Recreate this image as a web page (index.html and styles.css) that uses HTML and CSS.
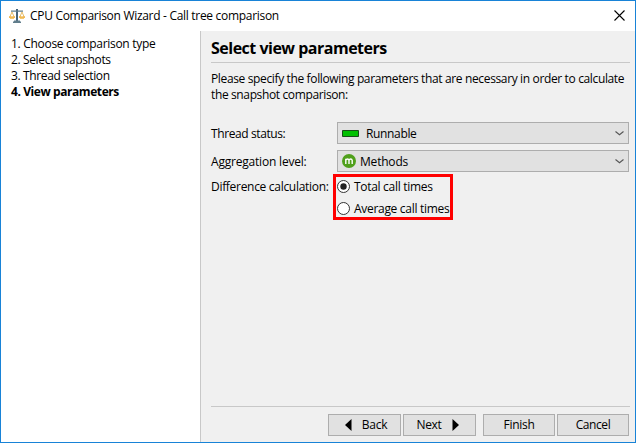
FILE: index.html
```html
<!DOCTYPE html>
<html lang="en">
<head>
<meta charset="utf-8">
<title>CPU Comparison Wizard</title>
<link rel="stylesheet" href="styles.css">
</head>
<body>
<div class="window">
  <header class="titlebar">
    <svg class="app-icon" width="16" height="16" viewBox="0 0 16 16">
      <path d="M7 1h2v12H7z" fill="#46647a"/>
      <path d="M2 2.5h12v1.3H2zM5 12.5h6v1H5zM4 13.5h8V15H4z" fill="#607d8b"/>
      <path d="M3 4L.8 9M3 4l2.2 5M13 4l-2.2 5M13 4l2.2 5" stroke="#e7bd69" fill="none"/>
      <path d="M0 8.5h6v1.3H0zM10 8.5h6v1.3h-6z" fill="#eda21c"/>
      <path d="M1 10h4v1H1zM11 10h4v1h-4z" fill="#f6ca73"/>
    </svg>
    <span class="caption">CPU Comparison Wizard - Call tree comparison</span>
    <svg class="close" width="11" height="11" viewBox="0 0 11 11"><path d="M.5.5l10 10M10.5.5l-10 10" stroke="#000" stroke-width="1.1"/></svg>
  </header>
  <div class="body">
    <ol class="steps">
      <li class="step-1">1. Choose comparison type</li>
      <li class="step-2">2. Select snapshots</li>
      <li class="step-3">3. Thread selection</li>
      <li class="current">4. View parameters</li>
    </ol>
    <main class="content">
      <h1><span>Select view parameters</span></h1>
      <p class="intro"><span class="intro-1">Please specify the following parameters that are necessary in order to calculate</span><br><span class="intro-2">the snapshot comparison:</span></p>
      <div class="form">
        <div class="label label-status">Thread status:</div>
        <div class="combo">
          <svg class="status-icon" width="17" height="7" viewBox="0 0 17 7"><path d="M.5.5h16v6H.5z" fill="#00c000" stroke="#174d17"/></svg>
          <span class="runnable">Runnable</span>
          <svg class="chevron" width="9" height="5" viewBox="0 0 9 5"><path d="M.5.5l4 3.2 4-3.2" fill="none" stroke="#555" stroke-width="1.1"/></svg>
        </div>
        <div class="label label-level">Aggregation level:</div>
        <div class="combo">
          <svg class="method-icon" width="14" height="14" viewBox="0 0 14 14"><circle cx="7" cy="7" r="7" fill="#50a01c"/><path d="M3.8 10V4.8M3.8 6.3Q4.3 5 5.5 5T7 6.3V10M7 6.3Q7.5 5 8.7 5T10.2 6.3V10" fill="none" stroke="#fff" stroke-width="1.4"/></svg>
          <span class="methods">Methods</span>
          <svg class="chevron" width="9" height="5" viewBox="0 0 9 5"><path d="M.5.5l4 3.2 4-3.2" fill="none" stroke="#555" stroke-width="1.1"/></svg>
        </div>
        <div class="label label-diff">Difference calculation:</div>
        <div class="choices">
          <div class="choice"><svg class="radio" width="13" height="13" viewBox="0 0 13 13"><circle cx="6.5" cy="6.5" r="6" fill="#fff" stroke="#333"/><circle cx="6.5" cy="6.5" r="3.2" fill="#222"/></svg><span class="total">Total call times</span></div>
          <div class="choice"><svg class="radio" width="13" height="13" viewBox="0 0 13 13"><circle cx="6.5" cy="6.5" r="6" fill="#fff" stroke="#333"/></svg><span class="average">Average call times</span></div>
        </div>
      </div>
      <footer class="actions">
        <div class="button back"><svg width="7" height="12" viewBox="0 0 7 12"><path d="M6.5 0v12L0 6z"/></svg><span>Back</span></div>
        <div class="button next"><span>Next</span><svg width="7" height="12" viewBox="0 0 7 12"><path d="M.5 0v12L7 6z"/></svg></div>
        <div class="button finish"><span>Finish</span></div>
        <div class="button cancel"><span>Cancel</span></div>
      </footer>
    </main>
  </div>
</div>
</body>
</html>
```
FILE: styles.css
```css
* { box-sizing: border-box; }
body { margin: 0; font: 12px/16px "Open Sans", "Noto Sans", sans-serif; letter-spacing: -.3px; color: #000; }
svg { display: block; flex: none; }
span { white-space: nowrap; }
.window { width: 636px; height: 443px; border: 1px solid #1883d7; background: #fff; display: flex; flex-direction: column; }
.titlebar { height: 30px; flex: none; display: flex; align-items: center; padding: 0 10px 0 8px; }
.caption { margin-left: 5px; }
.close { margin: -1px 0 0 auto; }
.body { flex: 1; display: flex; min-height: 0; }
.steps { width: 199px; flex: none; margin: 0; padding: 5px 0 0 10px; list-style: none; white-space: nowrap; }
.step-2, .step-3 { letter-spacing: -.37px; }
.current { font-weight: 700; letter-spacing: -.42px; }
.content { flex: 1; min-width: 0; display: flex; flex-direction: column; background: #f0f0f0; border-left: 1px solid #c8c8c8; padding: 0 5px 6px 10px; }
h1 { height: 32px; margin: 0; border-bottom: 1px solid #c8c8c8; font-size: 16px; line-height: 34px; font-weight: 700; letter-spacing: -.5px; }
.intro { margin: 8px 0 0; }
.intro-1 { letter-spacing: -.36px; }
.intro-2 { letter-spacing: -.37px; }
.form { margin-top: 19px; display: grid; grid-template-columns: 122px 296px; grid-template-rows: 22px 22px 46px; row-gap: 6px; }
.form > :nth-child(n+5) { margin-top: -4px; }
.label { line-height: 24px; white-space: nowrap; }
.label-status { letter-spacing: -.4px; }
.label-level { letter-spacing: -.2px; }
.label-diff { line-height: 26px; }
.combo { width: 292px; height: 22px; margin-left: 4px; border: 1px solid #adadad; background: #e1e1e1; display: flex; align-items: center; padding: 0 4px; }
.combo span { position: relative; top: 1px; }
.runnable { margin-left: 7px; letter-spacing: -.35px; }
.methods { margin-left: 4px; letter-spacing: -.2px; }
.chevron { margin-left: auto; }
.choices { width: 120px; height: 46px; border: 3px solid #f00; padding: 0 0 0 1px; }
.choice { height: 20px; display: flex; align-items: center; }
.choice + .choice { margin-top: 2px; }
.radio { margin: -1px 4px 0 0; }
.actions { margin-top: auto; height: 30px; border-top: 1px solid #c8c8c8; padding: 7px 1px 0 0; display: flex; justify-content: flex-end; }
.button { width: 73px; height: 22px; border: 1px solid #adadad; background: #e1e1e1; display: flex; align-items: center; justify-content: center; gap: 10px; margin-left: 2px; }
.back { padding-left: 3px; }
.next { padding-right: 4px; }
.finish, .cancel { width: 72px; }
.finish { margin-left: 7px; }
.cancel { letter-spacing: -.4px; }
```
